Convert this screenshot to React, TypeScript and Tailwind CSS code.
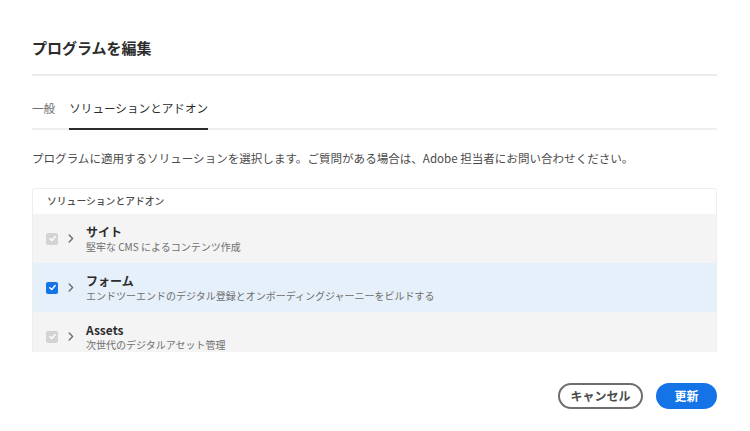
import React from "react";

const font = { fontFamily: '"Noto Sans CJK JP", "Noto Sans", sans-serif' };

function Check({ on }: { on: boolean }) {
  return (
    <div
      className={
        "w-[12px] h-[12px] rounded-[2px] flex items-center justify-center " +
        (on ? "bg-[#1473e6]" : "bg-[#d3d3d3]")
      }
    >
      <svg width="9" height="9" viewBox="0 0 10 10">
        <path d="M2 5.2 L4.2 7.3 L8 2.8" fill="none" stroke="#ffffff" strokeWidth="1.6" strokeLinecap="round" strokeLinejoin="round" />
      </svg>
    </div>
  );
}

function Chevron() {
  return (
    <svg width="6" height="9" viewBox="0 0 6 9">
      <path d="M1.2 1 L4.6 4.5 L1.2 8" fill="none" stroke="#6e6e6e" strokeWidth="1.4" strokeLinecap="round" strokeLinejoin="round" />
    </svg>
  );
}

function Row({ title, sub, on, selected }: { title: string; sub: string; on: boolean; selected?: boolean }) {
  return (
    <div className={"h-[49px] shrink-0 flex items-center pl-[13px] " + (selected ? "bg-[#e5f0fa]" : "bg-[#f4f4f4]")}>
      <Check on={on} />
      <div className="ml-[10px] w-[6px] flex items-center">
        <Chevron />
      </div>
      <div className="ml-[12px] flex flex-col">
        <div className="text-[12px] leading-[16px] font-bold text-[#2c2c2c]">{title}</div>
        <div className="text-[10px] leading-[14px] text-[#6e6e6e]">{sub}</div>
      </div>
    </div>
  );
}

export default function App() {
  return (
    <div className="w-[750px] h-[431px] bg-white overflow-hidden" style={font}>
      <div className="pl-8 pr-[33px] pt-[36px]">
        <div className="h-6 text-[15px] leading-6 font-bold text-[#2c2c2c]">プログラムを編集</div>
        <div className="mt-[14px] h-[2px] bg-[#ebebeb]" />
        <div className="mt-[23px] flex gap-[14px] border-b-2 border-[#efefef]">
          <div className="pb-[11px] text-[11.6px] leading-[18px] text-[#6e6e6e]">一般</div>
          <div className="pb-[11px] -mb-[2px] border-b-2 border-[#2c2c2c] text-[11.6px] leading-[18px] text-[#2c2c2c]">
            ソリューションとアドオン
          </div>
        </div>
        <div className="mt-[19px] text-[11.55px] leading-[18px] text-[#4b4b4b]">
          プログラムに適用するソリューションを選択します。ご質問がある場合は、Adobe 担当者にお問い合わせください。
        </div>
        <div className="mt-[21px] border border-b-0 border-[#eeeeee] rounded-t-[3px] overflow-hidden">
          <div className="h-[25px] flex items-center pl-[14px] bg-white text-[9.8px] font-medium text-[#4b4b4b]">
            ソリューションとアドオン
          </div>
          <div className="h-[138px] flex flex-col overflow-hidden">
            <Row title="サイト" sub="堅牢な CMS によるコンテンツ作成" on={false} />
            <Row title="フォーム" sub="エンドツーエンドのデジタル登録とオンボーディングジャーニーをビルドする" on={true} selected />
            <Row title="Assets" sub="次世代のデジタルアセット管理" on={false} />
          </div>
        </div>
        <div className="mt-[31px] flex justify-end gap-[13px]">
          <div className="h-[26px] w-[85px] rounded-full border-2 border-[#6e6e6e] flex items-center justify-center text-[12px] font-bold text-[#4b4b4b]">
            キャンセル
          </div>
          <div className="h-[26px] w-[61px] rounded-full bg-[#1473e6] flex items-center justify-center text-[12px] font-bold text-white">
            更新
          </div>
        </div>
      </div>
    </div>
  );
}
